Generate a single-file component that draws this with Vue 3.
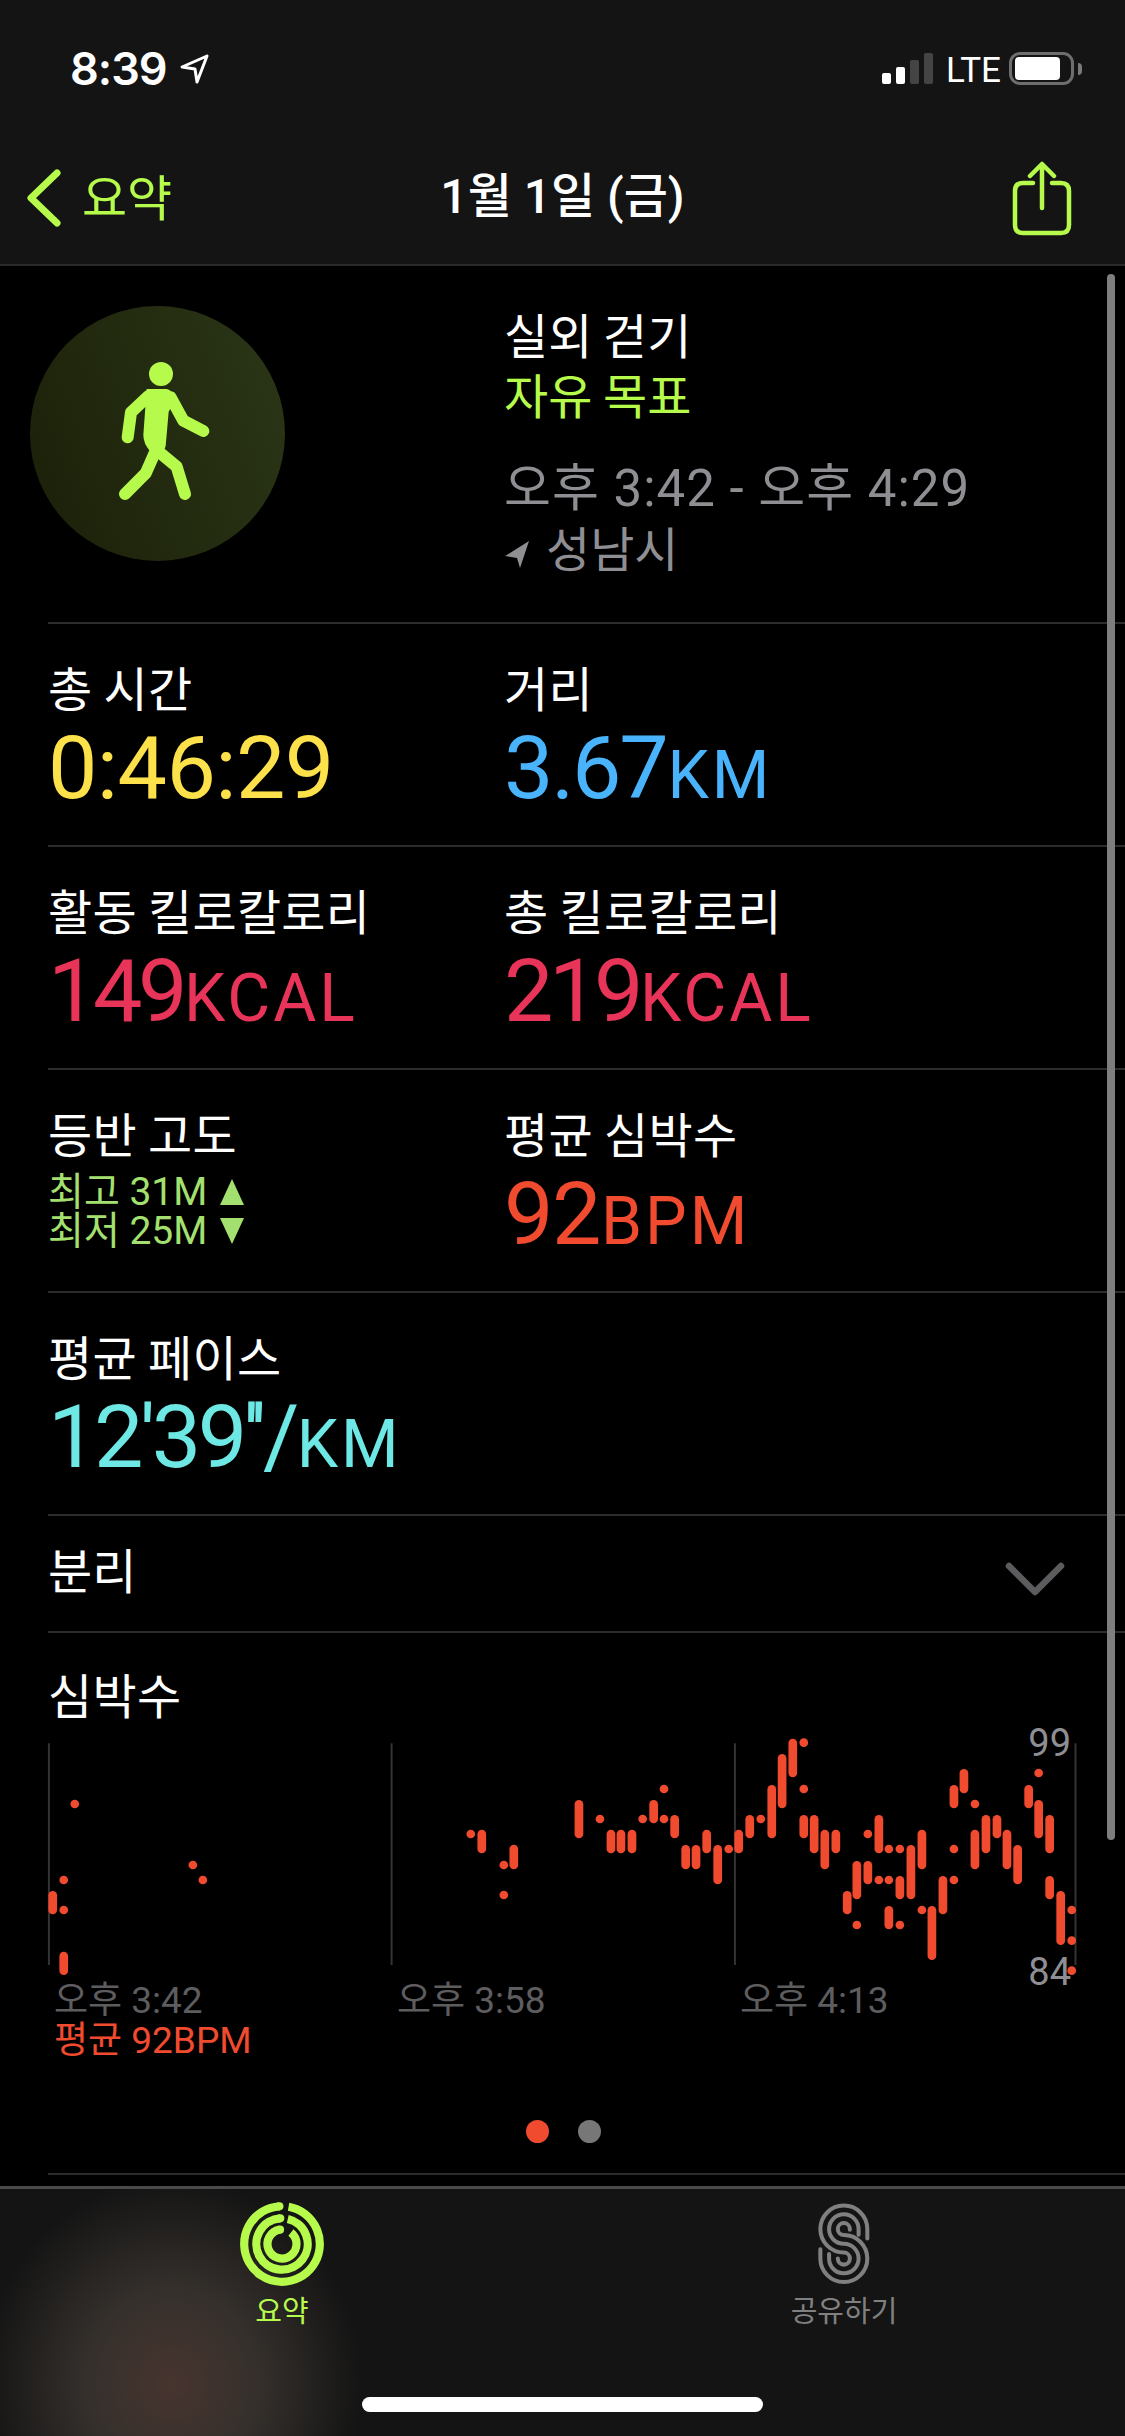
<template>
  <div class="screen">
    <header class="top">
      <div class="status">
        <div class="clock">
          <span>8:39</span>
          <svg class="loc" viewBox="0 0 30 30"><path d="M27 2 L2 13 L15 15 L17 28 Z" fill="none" stroke="#fff" stroke-width="3" stroke-linejoin="round" /></svg>
        </div>
        <div class="indicators">
          <div class="signal">
            <i class="on h1"></i><i class="on h2"></i><i class="h3"></i><i class="h4"></i>
          </div>
          <span class="lte">LTE</span>
          <div class="battery"><b></b></div>
          <div class="nub"></div>
        </div>
      </div>
      <nav class="bar">
        <div class="back">
          <svg class="chev" viewBox="0 0 38 60"><path d="M34 5 L8 30 L34 55" fill="none" stroke="#b6fb4b" stroke-width="7" stroke-linecap="round" stroke-linejoin="round" /></svg>
          <span>요약</span>
        </div>
        <h1>1월 1일 (금)</h1>
        <svg class="share" viewBox="1012 158 60 76"><path d="M1033 181 H1023 Q1015 181 1015 189 V223 Q1015 231 1023 231 H1061 Q1069 231 1069 223 V189 Q1069 181 1061 181 H1052 M1042 206 V163 M1030 174 L1042 162 L1054 174" fill="none" stroke="#b6fb4b" stroke-width="4.5" stroke-linecap="round" stroke-linejoin="round" /></svg>
      </nav>
    </header>

    <main class="content">
      <div class="scrollbar"></div>

      <section class="summary">
        <div class="badge">
          <svg viewBox="30 48 765 765" class="walker">
            <circle cx="423" cy="252" r="36" />
            <path class="solid" d="M380 297 H440 Q458 300 466 330 L446 365 L437 468 L425 500 L392 485 Q370 462 370 435 Z" />
            <path class="limb" d="M385 318 L333 367 L323 442" />
            <path class="limb" d="M452 322 L490 392 L550 423" />
            <path class="limb" d="M408 480 L377 550 L315 612" />
            <path class="limb" d="M422 490 L470 530 L495 612" />
          </svg>
        </div>
        <div class="meta">
          <div class="workout">실외 걷기</div>
          <div class="goal">자유 목표</div>
          <div class="range">오후 3:42 - 오후 4:29</div>
          <div class="place">
            <svg viewBox="0 0 26 30"><path d="M25 2 L1 17 L13 19 L16 29 Z" fill="#8e8e93" /></svg>
            <span>성남시</span>
          </div>
        </div>
      </section>

      <section class="row">
        <div class="cell">
          <div class="label">총 시간</div>
          <div class="value yellow">0:46:29</div>
        </div>
        <div class="cell">
          <div class="label">거리</div>
          <div class="value blue">3.67<small>KM</small></div>
        </div>
      </section>

      <section class="row">
        <div class="cell">
          <div class="label">활동 킬로칼로리</div>
          <div class="value pink">149<small>KCAL</small></div>
        </div>
        <div class="cell">
          <div class="label">총 킬로칼로리</div>
          <div class="value pink">219<small>KCAL</small></div>
        </div>
      </section>

      <section class="row">
        <div class="cell">
          <div class="label">등반 고도</div>
          <div class="elev">
            <div>최고 31M <i class="tri up"></i></div>
            <div>최저 25M <i class="tri down"></i></div>
          </div>
        </div>
        <div class="cell">
          <div class="label">평균 심박수</div>
          <div class="value red">92<small>BPM</small></div>
        </div>
      </section>

      <section class="row">
        <div class="cell">
          <div class="label">평균 페이스</div>
          <div class="value cyan">12'39''/<small>KM</small></div>
        </div>
      </section>

      <section class="split">
        <span>분리</span>
        <svg viewBox="0 0 60 36"><path d="M4 4 L30 30 L56 4" fill="none" stroke="#5c5c5e" stroke-width="6.5" stroke-linecap="round" stroke-linejoin="round" /></svg>
      </section>

      <section class="heart">
        <div class="label">심박수</div>
        <div class="chart">
          <span class="axis high">99</span>
          <span class="axis low">84</span>
          <svg viewBox="0 0 1070 280" class="plot">
            <line v-for="g in guides" :key="g" :x1="g" :x2="g" y1="23.3" y2="245" class="guide" />
            <line v-for="(b, i) in samples" :key="i" :x1="b[0]" :x2="b[0]" :y1="b[1]" :y2="b[2]" class="sample" />
          </svg>
        </div>
        <div class="times">
          <span>오후 3:42</span>
          <span>오후 3:58</span>
          <span>오후 4:13</span>
        </div>
        <div class="avg">평균 92BPM</div>
      </section>

      <div class="pager"><i class="active"></i><i></i></div>
    </main>

    <footer class="tabs">
      <div class="glow"></div>
      <div class="tab lime">
        <svg viewBox="-42 -42 84 84" class="rings">
          <path v-for="r in rings" :key="r.r" :d="r.d" fill="none" stroke="#b6fb4b" stroke-width="8.2" />
          <circle v-for="r in rings" :key="'e' + r.r" :cx="r.x" :cy="r.y" r="4.1" fill="#b6fb4b" />
        </svg>
        <span>요약</span>
      </div>
      <div class="tab grey">
        <svg viewBox="175 70 155 245" class="sharing">
          <path d="M322 176 V148 A70 70 0 1 0 252 218 A18 18 0 1 1 234 236" />
          <path d="M296 165 V148 A44 44 0 1 0 252 192 A44 44 0 1 1 208 236 V222" />
          <path d="M270 150 V148 A18 18 0 1 0 252 166 A70 70 0 1 1 182 236 V208" />
        </svg>
        <span>공유하기</span>
      </div>
      <div class="home"></div>
    </footer>
  </div>
</template>

<script setup>
// chart samples are kept in the units of the two plot halves: x / 2.904 + half offset, y / 3
const unitX = 2.904
const unitY = 3
const halfOffset = 530
const capRadius = 4.35

const guides = [55 / unitX, 1050 / unitX, halfOffset + 508 / unitX, halfOffset + 1497 / unitX]

// [x, top, bottom] per minute bucket; a lone reading has no bottom
const early = [
  [130, 252], [98, 480], [98, 570], [473, 435], [502, 480], [1280, 342], [1376, 435], [1376, 525],
  [66, 513, 583], [98, 695, 765], [1312, 329, 400], [1405, 374, 448],
]
const late = [
  [55, 240, 355], [148, 329, 400], [177, 329, 400], [209, 329, 400], [272, 240, 310], [333, 285, 355],
  [365, 375, 448], [395, 375, 448], [426, 329, 400], [458, 375, 493], [519, 329, 400], [551, 285, 355],
  [615, 195, 355], [645, 102, 265], [676, 56, 172], [708, 285, 355], [738, 285, 400], [769, 329, 448],
  [801, 329, 400], [834, 513, 583], [862, 423, 538], [894, 423, 493], [926, 285, 400], [955, 558, 628],
  [987, 468, 538], [1019, 375, 538], [1051, 329, 448], [1080, 558, 720], [1112, 468, 583], [1144, 195, 265],
  [1173, 147, 220], [1205, 329, 448], [1237, 285, 400], [1269, 285, 355], [1298, 329, 448], [1329, 375, 493],
  [1361, 195, 265], [1390, 240, 355], [1422, 285, 400], [1422, 468, 538], [1454, 513, 675],
  [116, 297], [240, 297], [302, 207], [302, 297], [490, 387], [583, 297], [708, 68], [708, 207],
  [894, 342], [955, 387], [987, 387], [926, 480], [955, 480], [862, 615], [987, 615], [1051, 570],
  [1144, 387], [1144, 480], [1205, 252], [1390, 159], [1486, 570], [1486, 662], [1486, 752],
]

const toLine = base => ([x, a, b]) => {
  const px = base + x / unitX
  if (b === undefined) return [px, a / unitY, a / unitY]
  return [px, a / unitY + capRadius, b / unitY - capRadius]
}
const samples = [...early.map(toLine(0)), ...late.map(toLine(halfOffset))]

// activity rings, clockwise from just right of twelve o'clock
const arc = (r, gap, tail) => {
  const a0 = (gap * Math.PI) / 180
  const a1 = ((360 - tail) * Math.PI) / 180
  const p = t => [r * Math.sin(t), -r * Math.cos(t)]
  const [sx, sy] = p(a0)
  const [ex, ey] = p(a1)
  return { r, d: `M${sx} ${sy} A${r} ${r} 0 1 1 ${ex} ${ey}`, x: ex, y: ey }
}
const rings = [arc(37.8, 10, 4), arc(25.7, 13, 4), arc(14.5, 38, 8)]
</script>

<style scoped>
.screen {
  width: 1125px;
  height: 2436px;
  background: #000;
  color: #fff;
  font-family: Roboto, "Noto Sans CJK KR", sans-serif;
  overflow: hidden;
  display: flex;
  flex-direction: column;
}

.top {
  height: 264px;
  flex: none;
  background: #141414;
  border-bottom: 2px solid #2a2a2a;
  box-sizing: content-box;
}

.status {
  height: 138px;
  display: flex;
  justify-content: space-between;
  align-items: flex-start;
  padding: 44px 43px 0 70px;
  box-sizing: border-box;
}

.clock {
  display: flex;
  align-items: center;
  gap: 13px;
  font-family: Inter, sans-serif;
  font-size: 45px;
  font-weight: 600;
  line-height: 50px;
  letter-spacing: -1px;
}

.loc {
  width: 30px;
  height: 30px;
}

.indicators {
  display: flex;
  align-items: flex-end;
  height: 33px;
  margin-top: 8px;
}

.signal {
  display: flex;
  align-items: flex-end;
  gap: 5px;
  margin-right: 13px;
  margin-bottom: 1px;
}

.signal i {
  width: 9px;
  background: #444;
  border-radius: 2px;
}

.signal i.on {
  background: #fff;
}

.h1 { height: 11px; }
.h2 { height: 17px; }
.h3 { height: 24px; }
.h4 { height: 31px; }

.lte {
  font-family: "Liberation Sans Narrow", Roboto, sans-serif;
  font-size: 35px;
  line-height: 33px;
  width: 50px;
  margin-right: 13px;
  white-space: nowrap;
  position: relative;
  top: 2px;
}

.battery {
  width: 65px;
  height: 33px;
  border: 3px solid #6e6e6e;
  border-radius: 11px;
  box-sizing: border-box;
  padding: 2px 3px;
}

.battery b {
  display: block;
  width: 45px;
  height: 100%;
  background: #fff;
  border-radius: 4px;
}

.nub {
  width: 4px;
  height: 12px;
  background: #7a7a7a;
  border-radius: 0 6px 6px 0;
  margin: 0 0 10px 4px;
}

.bar {
  position: relative;
  height: 126px;
  display: flex;
  align-items: center;
  justify-content: space-between;
  padding: 0 53px 6px 23px;
  box-sizing: border-box;
}

.back {
  display: flex;
  align-items: center;
  gap: 21px;
  color: #b6fb4b;
  font-family: "Noto Sans CJK KR", sans-serif;
  font-size: 49px;
}

.back span {
  margin-bottom: 8px;
}

.chev {
  width: 38px;
  height: 60px;
}

.bar h1 {
  position: absolute;
  left: 0;
  right: 0;
  top: 27px;
  margin: 0;
  text-align: center;
  font-size: 48px;
  font-weight: 500;
  line-height: 64px;
  pointer-events: none;
}

.share {
  width: 60px;
  height: 76px;
}

.content {
  position: relative;
  flex: 1;
}

.scrollbar {
  position: absolute;
  right: 10px;
  top: 8px;
  width: 8px;
  height: 1566px;
  background: #7e7e7e;
  border-radius: 4px;
  z-index: 2;
}

.summary {
  height: 358px;
  display: flex;
  margin-left: 48px;
  border-bottom: 2px solid #2c2c2e;
  box-sizing: border-box;
}

.badge {
  width: 255px;
  height: 255px;
  border-radius: 50%;
  margin: 40px 0 0 -18px;
  background: linear-gradient(70deg, #1b2008, #2b3617);
  flex: none;
}

.walker {
  width: 255px;
  height: 255px;
  display: block;
  fill: #b6fb4b;
}

.limb {
  fill: none;
  stroke: #b6fb4b;
  stroke-width: 36;
  stroke-linecap: round;
  stroke-linejoin: round;
}

.meta {
  margin-left: 219px;
  padding-top: 37px;
  font-family: "Noto Sans CJK KR", sans-serif;
  font-size: 48px;
  line-height: 60px;
}

.goal {
  color: #b6fb4b;
}

.range,
.place {
  color: #8e8e93;
  font-family: Roboto, "Noto Sans CJK KR", sans-serif;
}

.range {
  margin-top: 36px;
  font-size: 51px;
  letter-spacing: 1px;
}

.place {
  display: flex;
  align-items: center;
  gap: 16px;
  margin-top: 2px;
}

.place svg {
  width: 26px;
  height: 30px;
  margin-top: 6px;
}

.row {
  height: 223px;
  display: flex;
  margin-left: 48px;
  padding-top: 32px;
  border-bottom: 2px solid #2c2c2e;
  box-sizing: border-box;
}

.cell {
  width: 456px;
}

.label {
  font-family: "Noto Sans CJK KR", sans-serif;
  font-size: 48px;
  line-height: 60px;
  letter-spacing: 0.3px;
}

.value {
  font-size: 88px;
  line-height: 96px;
  margin-top: 4px;
  letter-spacing: -1.5px;
}

.value small {
  font-size: 66px;
  margin-left: 1px;
  letter-spacing: 3px;
}

.yellow { color: #fde14b; letter-spacing: -0.6px; }
.blue { color: #49b4fc; letter-spacing: -2.3px; }
.pink { color: #e9345a; letter-spacing: -4.5px; }
.red { color: #f04b2f; }
.cyan { color: #6ee8e4; letter-spacing: -3.5px; }

.elev {
  color: #a4e06f;
  font-size: 39px;
  line-height: 39px;
  margin-top: 11px;
}

.tri {
  display: inline-block;
  margin-left: 3px;
  width: 0;
  height: 0;
  border-left: 12px solid transparent;
  border-right: 12px solid transparent;
}

.tri.up {
  border-bottom: 26px solid #a4e06f;
}

.tri.down {
  border-top: 26px solid #a4e06f;
}

.split {
  height: 117px;
  margin-left: 48px;
  display: flex;
  align-items: center;
  justify-content: space-between;
  padding-right: 60px;
  border-bottom: 2px solid #2c2c2e;
  box-sizing: border-box;
  font-family: "Noto Sans CJK KR", sans-serif;
  font-size: 48px;
}

.split span {
  margin-bottom: 12px;
}

.split svg {
  width: 60px;
  height: 36px;
  margin-top: 12px;
}

.heart {
  height: 487px;
  padding: 30px 0 0 48px;
  box-sizing: border-box;
}

.chart {
  position: relative;
  margin: -3px 0 0 -18px;
  width: 1070px;
  height: 280px;
}

.plot {
  position: absolute;
  inset: 0;
  width: 1070px;
  height: 280px;
}

.guide {
  stroke: #333;
  stroke-width: 2;
}

.sample {
  stroke: #f04b2f;
  stroke-width: 8.7;
  stroke-linecap: round;
}

.axis {
  position: absolute;
  right: 29px;
  font-size: 38px;
  line-height: 36px;
  color: #8e8e93;
}

.high { top: 5px; }
.low { top: 234px; }

.times {
  display: flex;
  margin-top: -21px;
  margin-left: 6px;
  font-size: 37px;
  line-height: 44px;
  color: #5d5d5f;
}

.times span {
  width: 343px;
}

.avg {
  margin: -4px 0 0 6px;
  color: #f04b2f;
  font-size: 37px;
  line-height: 44px;
}

.pager {
  display: flex;
  gap: 29px;
  margin-left: 48px;
  padding: 0 0 30px 478px;
  border-bottom: 2px solid #2c2c2e;
}

.pager i {
  width: 23px;
  height: 23px;
  border-radius: 50%;
  background: #777;
}

.pager i.active {
  background: #f04b2f;
}

.tabs {
  position: relative;
  height: 250px;
  flex: none;
  background: #141414;
  border-top: 3px solid #4a4a4a;
  box-sizing: border-box;
  display: flex;
  overflow: hidden;
}

.glow {
  position: absolute;
  left: -100px;
  top: 0;
  width: 620px;
  height: 360px;
  background: radial-gradient(ellipse 190px 205px at 272px 194px, #47342f 0, #35302c 45%, rgba(20, 20, 20, 0) 100%);
}

.tab {
  position: absolute;
  top: 13px;
  width: 200px;
  display: flex;
  flex-direction: column;
  align-items: center;
  font-family: "Noto Sans CJK KR", sans-serif;
  font-size: 29px;
}

.tab.lime {
  left: 182px;
  color: #b6fb4b;
}

.tab.grey {
  left: 744px;
  color: #808080;
}

.rings {
  width: 84px;
  height: 84px;
}

.sharing {
  width: 52px;
  height: 84px;
  fill: none;
  stroke: #808080;
  stroke-width: 12;
  stroke-linecap: round;
}

.tab span {
  line-height: 40px;
  margin-top: 3px;
}

.home {
  position: absolute;
  left: 362px;
  top: 208px;
  width: 401px;
  height: 15px;
  background: #fff;
  border-radius: 8px;
}
</style>

<style>
html, body {
  background: #000;
}
</style>
